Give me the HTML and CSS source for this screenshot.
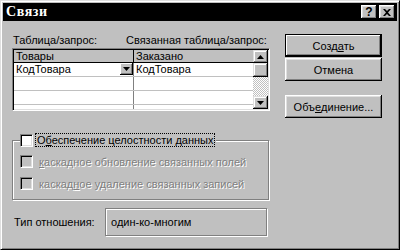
FILE: index.html
```html
<!DOCTYPE html>
<html lang="ru">
<head>
    <meta charset="UTF-8" />
    <title>Связи</title>
    <link rel="stylesheet" href="styles.css">
</head>
<body>
    <div class="window">
        <div class="titlebar">
            <span class="title">Связи</span>
            <span class="tb-btn help">?</span>
            <span class="tb-btn">
                <svg width="8" height="7" viewBox="0 0 8 7"><path d="M0 0h2l2 2 2-2h2L5 3.5 8 7H6L4 5 2 7H0l3-3.5z" fill="#000"/></svg>
            </span>
        </div>
        <div class="content">
            <div class="left">
                <div class="labels">
                    <span class="lbl-main">Таблица/запрос:</span>
                    <span>Связанная таблица/запрос:</span>
                </div>
                <div class="grid">
                    <div class="table">
                        <div class="row head">
                            <div class="cell c1">Товары</div>
                            <div class="cell c2">Заказано</div>
                        </div>
                        <div class="row">
                            <div class="cell c1">КодТовара
                                <span class="drop"><svg width="7" height="4" viewBox="0 0 7 4"><path d="M0 0h7L3.5 4z" fill="#000"/></svg></span>
                            </div>
                            <div class="cell c2">КодТовара</div>
                        </div>
                        <div class="row"><div class="cell c1"></div><div class="cell c2"></div></div>
                        <div class="row"><div class="cell c1"></div><div class="cell c2"></div></div>
                        <div class="row"><div class="cell c1"></div><div class="cell c2"></div></div>
                    </div>
                    <div class="scrollbar">
                        <div class="sb-btn"><svg width="7" height="4" viewBox="0 0 7 4"><path d="M3.5 0L7 4H0z" fill="#000"/></svg></div>
                        <div class="sb-thumb"></div>
                        <div class="sb-track"></div>
                        <div class="sb-btn"><svg width="7" height="4" viewBox="0 0 7 4"><path d="M0 0h7L3.5 4z" fill="#000"/></svg></div>
                    </div>
                </div>
                <fieldset class="group">
                    <legend>
                        <span class="legend-in">
                            <span class="check"></span>
                            <span class="focus">О<u>б</u>еспечение целостности данных</span>
                        </span>
                    </legend>
                    <div class="opt first">
                        <span class="check off"></span>
                        <span class="dim"><u>к</u>аскадное обновление связанных полей</span>
                    </div>
                    <div class="opt">
                        <span class="check off"></span>
                        <span class="dim">каскад<u>н</u>ое удаление связанных записей</span>
                    </div>
                </fieldset>
                <div class="type-row">
                    <span class="type-label">Тип отношения:</span>
                    <span class="type-box">один-ко-многим</span>
                </div>
            </div>
            <div class="buttons">
                <div class="btn default">Созд<u>а</u>ть</div>
                <div class="btn">Отмена</div>
                <div class="btn join">Объ<u>е</u>динение...</div>
            </div>
        </div>
    </div>
</body>
</html>
```

FILE: styles.css
```css
html, body {
    margin: 0;
    padding: 0;
    background-color: #c0c0c0;
}

.window {
    width: 400px;
    height: 250px;
    box-sizing: border-box;
    padding: 2px;
    border: 1px solid;
    border-color: #dfdfdf #000 #000 #dfdfdf;
    box-shadow: inset 1px 1px #fff, inset -1px -1px #808080;
    background-color: #c0c0c0;
    font: 11px "Liberation Sans", Arial, sans-serif;
    color: #000;
}

.titlebar {
    display: flex;
    align-items: center;
    height: 18px;
    padding: 0 2px 0 3px;
    background-color: #000;
    color: #fff;
}

.title {
    flex: 1;
    font: bold 14px "Liberation Serif", serif;
    letter-spacing: 0.6px;
}

.tb-btn {
    display: flex;
    align-items: center;
    justify-content: center;
    width: 16px;
    height: 14px;
    box-sizing: border-box;
    background-color: #c0c0c0;
    box-shadow: inset -1px -1px #000, inset 1px 1px #fff, inset -2px -2px #808080, inset 2px 2px #dfdfdf;
    color: #000;
}

.tb-btn + .tb-btn {
    margin-left: 2px;
}

.help {
    font: bold 12px "Liberation Sans", sans-serif;
}

.content {
    display: flex;
    gap: 15px;
    padding: 12px 0 0 9px;
}

.left {
    width: 258px;
}

.labels {
    display: flex;
    height: 14px;
    line-height: 14px;
    margin-bottom: 1px;
}

.lbl-main {
    width: 113px;
    padding-left: 1px;
}

/* таблица полей */
.grid {
    display: flex;
    height: 63px;
    box-sizing: border-box;
    padding: 1px;
    border: 1px solid;
    border-color: #808080 #fff #fff #808080;
    box-shadow: inset 1px 1px #000, inset -1px -1px #dfdfdf;
    background-color: #fff;
    overflow: hidden;
}

.table {
    flex: 1;
    overflow: hidden;
}

.row {
    display: flex;
    height: 14px;
    box-sizing: border-box;
    border-bottom: 1px solid #c0c0c0;
    line-height: 13px;
}

.row.head {
    height: 13px;
    background-color: #c0c0c0;
    border-bottom-color: #000;
    line-height: 12px;
}

.cell {
    position: relative;
    padding-left: 2px;
    white-space: nowrap;
}

.c1 {
    width: 117px;
    border-right: 1px solid #808080;
}

.head .c1 {
    border-right-color: #000;
}

.c2 {
    flex: 1;
}

.drop {
    position: absolute;
    top: 0;
    right: 0;
    display: flex;
    align-items: center;
    justify-content: center;
    width: 13px;
    height: 12px;
    box-sizing: border-box;
    background-color: #c0c0c0;
    box-shadow: inset -1px -1px #000, inset 1px 1px #fff, inset -2px -2px #808080;
}

.scrollbar {
    display: flex;
    flex-direction: column;
    width: 15px;
    background-color: #fff;
    background-image: conic-gradient(#c0c0c0 25%, #fff 0 50%, #c0c0c0 0 75%, #fff 0);
    background-size: 2px 2px;
}

.sb-btn, .sb-thumb {
    display: flex;
    align-items: center;
    justify-content: center;
    height: 13px;
    background-color: #c0c0c0;
    box-shadow: inset -1px -1px #000, inset 1px 1px #dfdfdf, inset -2px -2px #808080, inset 2px 2px #fff;
}

.sb-thumb {
    height: 14px;
}

.sb-track {
    flex: 1;
}

/* группа флажков */
.group {
    width: 257px;
    box-sizing: border-box;
    margin: 22px 0 0;
    padding: 0 0 9px 7px;
    border: 1px solid #808080;
    box-shadow: inset 1px 1px #fff, 1px 1px #fff;
}

.group legend {
    padding: 0 2px 0 0;
    background-color: #c0c0c0;
}

.legend-in {
    display: flex;
    align-items: center;
    gap: 3px;
    height: 14px;
}

.focus {
    padding: 0 1px;
    line-height: 12px;
    outline: 1px dotted #000;
}

.check {
    width: 13px;
    height: 13px;
    box-sizing: border-box;
    border: 1px solid;
    border-color: #808080 #fff #fff #808080;
    box-shadow: inset 1px 1px #000, inset -1px -1px #dfdfdf;
    background-color: #fff;
}

.check.off {
    background-color: #c0c0c0;
}

.opt {
    display: flex;
    align-items: center;
    gap: 6px;
    height: 13px;
    margin-top: 9px;
}

.opt.first {
    margin-top: 8px;
}

.dim {
    color: #808080;
    text-shadow: 1px 1px 0 #fff;
}

.type-row {
    display: flex;
    align-items: center;
    margin-top: 8px;
}

.type-label {
    width: 93px;
    padding-left: 2px;
    box-sizing: border-box;
}

.type-box {
    display: flex;
    align-items: center;
    width: 162px;
    height: 28px;
    box-sizing: border-box;
    padding-left: 5px;
    border: 1px solid #808080;
    box-shadow: inset 1px 1px #fff, 1px 1px #fff;
}

/* кнопки */
.buttons {
    display: flex;
    flex-direction: column;
    width: 97px;
    padding-top: 1px;
}

.btn {
    display: flex;
    align-items: center;
    justify-content: center;
    height: 23px;
    box-sizing: border-box;
    margin-bottom: 1px;
    background-color: #c0c0c0;
    box-shadow: inset -1px -1px #000, inset 1px 1px #fff, inset -2px -2px #808080, inset 2px 2px #dfdfdf;
}

.btn.default {
    border: 1px solid #000;
    box-shadow: inset -1px -1px #000, inset 1px 1px #fff, inset -2px -2px #808080;
}

.btn.join {
    margin-top: 13px;
}
```
